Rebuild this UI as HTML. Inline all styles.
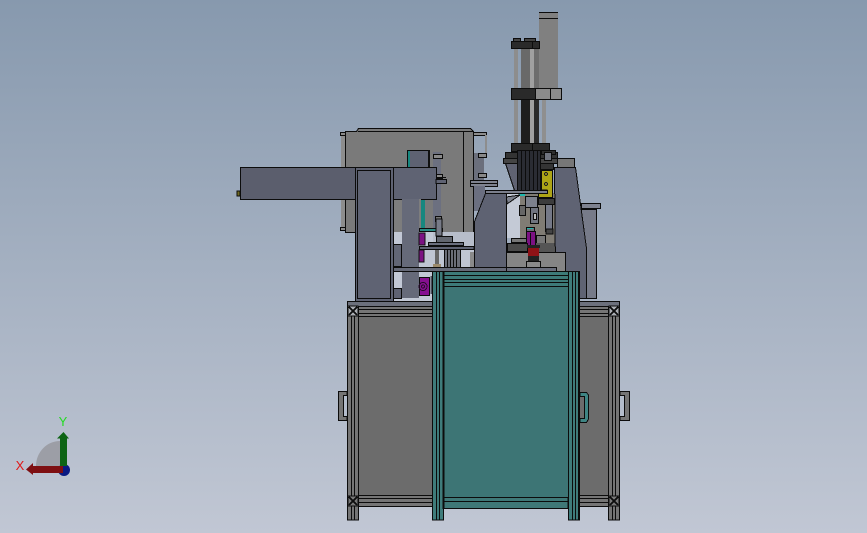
<!DOCTYPE html>
<html>
<head>
<meta charset="utf-8">
<style>
html,body{margin:0;padding:0;width:867px;height:533px;overflow:hidden;background:#a5afc0}
svg{display:block}
</style>
</head>
<body>
<svg width="867" height="533" viewBox="0 0 867 533" xmlns="http://www.w3.org/2000/svg">
<defs>
<linearGradient id="bg" x1="0" y1="0" x2="0" y2="1">
<stop offset="0" stop-color="#8799ae"/>
<stop offset="1" stop-color="#c1c7d4"/>
</linearGradient>
</defs>
<rect width="867" height="533" fill="url(#bg)"/>

<g stroke="#0c0c0c" stroke-width="1" shape-rendering="crispEdges">
<!-- tall cylinder + rods -->
<rect x="514" y="49" width="4" height="94" fill="#8d8d8d" stroke="none"/>
<rect x="521" y="49" width="9" height="39" fill="#696969" stroke="none"/>
<rect x="530" y="49" width="4" height="94" fill="#a0a0a0" stroke="none"/>
<rect x="534" y="49" width="5" height="39" fill="#6d6d6d" stroke="none"/>
<rect x="521" y="100" width="9" height="43" fill="#1e1e1e" stroke="none"/>
<rect x="534" y="100" width="5" height="43" fill="#2a2a2a" stroke="none"/>
<rect x="542" y="100" width="4" height="43" fill="#8f8f8f" stroke="none"/>
<rect x="539" y="12" width="19" height="76" fill="#808080" stroke="none"/>
<path d="M539 12.5H558M539 18.5H558" fill="none"/>
<rect x="511.5" y="41.5" width="28" height="7" fill="#2a2a2a"/>
<line x1="532.5" y1="41" x2="532.5" y2="49"/>
<rect x="513.5" y="38.5" width="7" height="3" fill="#444"/>
<rect x="524.5" y="38.5" width="11" height="3" fill="#444"/>
<rect x="511.5" y="88.5" width="24" height="11" fill="#2a2a2a"/>
<rect x="535.5" y="88.5" width="15" height="11" fill="#8b8b8b"/>
<rect x="550.5" y="88.5" width="11" height="11" fill="#8b8b8b"/>
<rect x="511.5" y="143.5" width="38" height="8" fill="#2a2a2a"/>
<line x1="532.5" y1="143" x2="532.5" y2="152"/>

<!-- back grey housing -->
<path d="M345.5 131.5 L356.5 131.5 L358.5 128.5 L470.5 128.5 L473.5 131.5 L473.5 232.5 L345.5 232.5 Z" fill="#7a7a7a"/>
<line x1="358" y1="131.5" x2="473" y2="131.5"/>
<line x1="463.5" y1="131" x2="463.5" y2="232"/>
<rect x="341" y="133" width="4" height="96" fill="#8d8d8d" stroke="none"/>
<rect x="340.5" y="132.5" width="5" height="3" fill="#8a8a8a"/>
<rect x="340.5" y="227.5" width="5" height="3" fill="#8a8a8a"/>
<rect x="473.5" y="132.5" width="13" height="3" fill="#8d8d8d"/>
<rect x="485" y="135" width="2" height="20" fill="#8d8d8d" stroke="none"/>
<rect x="407.5" y="150.5" width="21" height="17" fill="#5e6272"/>
<rect x="408" y="151" width="2" height="16" fill="#17877f" stroke="none"/>
<rect x="428" y="150" width="2" height="17" fill="#111" stroke="none"/>
<rect x="433" y="152" width="8" height="80" fill="#6c7080" stroke="none"/>
<rect x="433.5" y="154.5" width="9" height="4" fill="#8a8a8a"/>
<rect x="433.5" y="174.5" width="9" height="4" fill="#8a8a8a"/>
<rect x="435.5" y="216.5" width="6" height="5" fill="#777"/>
<path d="M393 177.5 H446 M393 180.5 H421 M393 183.5 H421" fill="none"/>

<!-- gap light area -->
<rect x="393" y="232" width="40" height="70" fill="#c2c8d5" stroke="none"/>
<rect x="433" y="232" width="41" height="15" fill="#b7bdca" stroke="none"/>
<rect x="420" y="250" width="54" height="18" fill="#bfc5d2" stroke="none"/>
<rect x="393" y="199" width="9" height="33" fill="#7d7d7d" stroke="none"/>

<!-- conveyor -->
<rect x="240.5" y="167.5" width="115" height="32" fill="#5b5e6d"/>
<rect x="237" y="191" width="3" height="5" fill="#6f6a20"/>
<!-- column 1 -->
<rect x="355.5" y="167.5" width="38" height="134" fill="#5f6373"/>
<rect x="357.5" y="170.5" width="33" height="128" fill="#5f6373"/>
<!-- horizontal arm and column 2 -->
<path d="M393.5 167.5 H436.5 V199.5 H393.5 Z" fill="#5f6373"/>
<path d="M436 179.5 H446.5 V183.5 H436 Z" fill="#5f6373"/>
<rect x="402" y="199" width="17" height="99" fill="#666a79" stroke="none"/>
<rect x="419" y="199" width="2" height="30" fill="#7d7d7d" stroke="none"/>
<rect x="421" y="200" width="4" height="29" fill="#17877f" stroke="none"/>
<rect x="419.5" y="228.5" width="23" height="3" fill="#2b8a83"/>
<rect x="393.5" y="244.5" width="8" height="22" fill="#626675"/>
<rect x="393.5" y="288.5" width="8" height="10" fill="#5f6373"/>
<!-- purple bits -->
<rect x="419" y="233" width="6" height="12" fill="#7c1283" stroke="#111"/>
<rect x="419" y="250" width="5" height="12" fill="#7c1283" stroke="#111"/>
<rect x="419.5" y="277.5" width="10" height="18" fill="#861090"/>
<circle cx="423" cy="286.5" r="4" fill="none" stroke="#2a0a2e"/>
<circle cx="423" cy="286.5" r="1.5" fill="none" stroke="#2a0a2e"/>
<rect x="430.5" y="276" width="2" height="18" fill="#4a4f5c" stroke="none"/>
<!-- mid rails and pulley -->
<rect x="428.5" y="242.5" width="35" height="3" fill="#6a6e7d"/>
<rect x="436.5" y="236.5" width="16" height="6" fill="#62666f"/>
<rect x="436" y="219" width="6" height="17" fill="#777b88"/>
<rect x="419.5" y="246.5" width="54.5" height="3" fill="#5f6373"/>
<rect x="444.5" y="249.5" width="16" height="18" fill="#6b6e78"/>
<path d="M447.5 250V267M450.5 250V267M453.5 250V267M456.5 250V267" fill="none"/>
<rect x="435" y="250" width="4" height="15" fill="#666" stroke="none"/>
<rect x="433" y="264" width="8" height="3" fill="#9b8a6c" stroke="none"/>
<rect x="470" y="252" width="4" height="15" fill="#8a8a8a" stroke="none"/>
<rect x="470.5" y="180.5" width="27" height="3" fill="#7f8390"/>
<rect x="470.5" y="183.5" width="27" height="3" fill="#7f8390"/>
<rect x="474" y="153" width="10" height="27" fill="#6b6f7c" stroke="none"/>
<rect x="478.5" y="153.5" width="8" height="4" fill="#888"/>
<rect x="478.5" y="173.5" width="8" height="4" fill="#888"/>
<rect x="474" y="186" width="11" height="25" fill="#6b6f80" stroke="none"/>

<!-- right back column -->
<rect x="581.5" y="209.5" width="15" height="89" fill="#777b89"/>
<rect x="581.5" y="203.5" width="19" height="5" fill="#7f8390"/>

<!-- center mechanism background -->
<rect x="507" y="193" width="14" height="45" fill="#c4cad6" stroke="none"/>
<rect x="520" y="193" width="35" height="60" fill="#807c74" stroke="none"/>
<!-- funnel -->
<path d="M505.5 163.5 H517.5 V190.5 H514.5 Z" fill="#5f6272"/>
<rect x="517.5" y="150.5" width="23" height="40" fill="#2a2c33"/>
<path d="M521.5 151V190M525.5 151V190M529.5 151V190M533.5 151V190M537.5 151V190" fill="none"/>
<rect x="505.5" y="152.5" width="12" height="6" fill="#333"/>
<rect x="503.5" y="158.5" width="14" height="5" fill="#444"/>
<rect x="540.5" y="152.5" width="17" height="6" fill="#333"/>
<rect x="540.5" y="158.5" width="19" height="5" fill="#444"/>
<rect x="541.5" y="150.5" width="14" height="4" fill="#2e2e2e"/>
<rect x="544.5" y="152.5" width="7" height="8" fill="#70747f"/>
<rect x="540.5" y="163.5" width="13" height="6" fill="#333"/>
<rect x="557.5" y="158.5" width="17" height="9" fill="#777"/>
<!-- yellow -->
<path d="M541.5 170.5 H552.5 V197.5 H538.5 V193.5 H547 V190 H541.5 Z" fill="#aea516"/>
<circle cx="546" cy="174" r="1.4" fill="none" stroke="#222"/>
<circle cx="546" cy="184" r="1.4" fill="none" stroke="#222"/>
<!-- mechanism details -->
<rect x="485.5" y="190.5" width="62" height="3" fill="#7b7f8c"/>
<rect x="519" y="194" width="6" height="2" fill="#1fb7ad" stroke="none"/>
<rect x="525.5" y="196.5" width="12" height="11" fill="#7d818d"/>
<rect x="519.5" y="205.5" width="6" height="10" fill="#666"/>
<rect x="530.5" y="207.5" width="8" height="16" fill="#70747f"/>
<rect x="533.5" y="213.5" width="3" height="6" fill="#bbb"/>
<rect x="538.5" y="198.5" width="16" height="6" fill="#3c3c3c"/>
<rect x="545.5" y="204.5" width="7" height="27" fill="#757987"/>
<rect x="546" y="229" width="7" height="5" fill="#444"/>
<rect x="526.5" y="227.5" width="8" height="4" fill="#6b6f79"/>
<rect x="527" y="228" width="6" height="1" fill="#1fb7ad" stroke="none"/>
<rect x="526.5" y="231.5" width="9" height="17" fill="#7c1283"/>
<line x1="530.5" y1="233" x2="530.5" y2="248"/>
<rect x="511.5" y="238.5" width="15" height="4" fill="#777"/>
<rect x="507.5" y="243.5" width="20" height="8" fill="#4a4a4a"/>
<rect x="536.5" y="235.5" width="9" height="8" fill="#777"/>
<rect x="536" y="243" width="19" height="9" fill="#555" stroke="none"/>
<!-- slate A and right slate -->
<path d="M485.5 193.5 H506.5 V267.5 H474.5 V221.5 Z" fill="#5e6272"/>
<path d="M506.5 197 L520 195 L507 204 Z" fill="#7d818d"/>
<path d="M554.5 167.5 H575.5 L586.5 248.5 V298.5 H579.5 V271.5 H555.5 Z" fill="#5f6373"/>
<!-- base -->
<rect x="506.5" y="252.5" width="59" height="19" fill="#858585"/>
<rect x="528" y="248" width="11" height="8" fill="#8f1216" stroke="none"/>
<rect x="527" y="245" width="13" height="3" fill="#222" stroke="none"/>
<rect x="528" y="256" width="11" height="5" fill="#222" stroke="none"/>
<rect x="526.5" y="261.5" width="14" height="10" fill="#8a8a8a"/>

<rect x="393.5" y="267.5" width="113" height="4" fill="#666a78"/>
<rect x="506.5" y="267.5" width="50" height="4" fill="#6a6e7c"/>

<!-- frame -->
<rect x="347.5" y="301.5" width="272" height="5" fill="#6c707c"/>
<rect x="358.5" y="316.5" width="74" height="179" fill="#6c6c6c"/>
<rect x="579.5" y="316.5" width="29" height="179" fill="#6c6c6c"/>
<rect x="358.5" y="306.5" width="74" height="10" fill="#757575"/>
<path d="M358 309.5H432M358 313.5H432" fill="none"/>
<rect x="579.5" y="306.5" width="29" height="10" fill="#757575"/>
<path d="M580 309.5H608M580 313.5H608" fill="none"/>
<rect x="358.5" y="495.5" width="74" height="11" fill="#757575"/>
<path d="M358 498.5H432M358 502.5H432" fill="none"/>
<rect x="579.5" y="495.5" width="29" height="11" fill="#757575"/>
<path d="M580 498.5H608M580 502.5H608" fill="none"/>
<rect x="347.5" y="306.5" width="11" height="213.5" fill="#757575"/>
<path d="M351.5 306V520M354.5 306V520" fill="none"/>
<rect x="608.5" y="306.5" width="11" height="213.5" fill="#757575"/>
<path d="M612.5 306V520M615.5 306V520" fill="none"/>
<!-- corners -->
<rect x="348" y="306" width="10" height="10" fill="#a9acb2"/>
<path d="M349 307L357 315M357 307L349 315" stroke-width="2" fill="none"/>
<rect x="609" y="306" width="10" height="10" fill="#a9acb2"/>
<path d="M610 307L618 315M618 307L610 315" stroke-width="2" fill="none"/>
<rect x="348" y="496" width="10" height="10" fill="#777"/>
<path d="M349 497L357 505M357 497L349 505" stroke-width="2" fill="none"/>
<rect x="609" y="496" width="10" height="10" fill="#777"/>
<path d="M610 497L618 505M618 497L610 505" stroke-width="2" fill="none"/>
<!-- handles -->
<path d="M347 391.5H338.5V420.5H347V416.5H343.5V395.5H347Z" fill="#747474"/>
<path d="M620 391.5H629.5V420.5H620V416.5H624.5V395.5H620Z" fill="#747474"/>

<!-- teal -->
<rect x="444" y="287" width="124" height="211" fill="#3d7575" stroke="none"/>
<rect x="432.5" y="271.5" width="147" height="15" fill="#3d7a79"/>
<path d="M444 275.5H568M444 279.5H568M444 282.5H568" fill="none"/>
<rect x="444" y="497.5" width="124" height="11" fill="#3f7877"/>
<path d="M444 501.5H568" fill="none"/>
<rect x="432.5" y="271.5" width="11" height="248.5" fill="#3f7c7b"/>
<path d="M436.5 271V520M439.5 271V520" fill="none"/>
<line x1="443.5" y1="271" x2="443.5" y2="509" stroke-width="2"/>
<rect x="568.5" y="271.5" width="11" height="248.5" fill="#3f7c7b"/>
<path d="M572.5 271V520M575.5 271V520" fill="none"/>
<line x1="579" y1="271" x2="579" y2="520" stroke-width="2"/>
<path d="M580 392.5H586.5L588.5 395V419L586.5 422.5H580V418.5H584.5V396.5H580Z" fill="#3f8584"/>
</g>

<!-- triad -->
<path d="M36 466 A24 25 0 0 1 60 441 L63 441 L63 466 Z" fill="#9c9ea6"/>
<circle cx="64" cy="470" r="6" fill="#0b1a82"/>
<rect x="60" y="438" width="7" height="28" fill="#0d6414"/>
<path d="M57 438.5 L63.5 432 L69 438.5 Z" fill="#0d6414"/>
<rect x="33" y="466" width="30" height="7" fill="#7e0f12"/>
<path d="M33 463 L26 469.5 L33 475 Z" fill="#7e0f12"/>
<text x="20" y="470" font-family="Liberation Sans, sans-serif" font-size="13" fill="#e01818" text-anchor="middle">X</text>
<text x="63" y="426" font-family="Liberation Sans, sans-serif" font-size="13" fill="#22dc22" text-anchor="middle">Y</text>
</svg>
</body>
</html>
